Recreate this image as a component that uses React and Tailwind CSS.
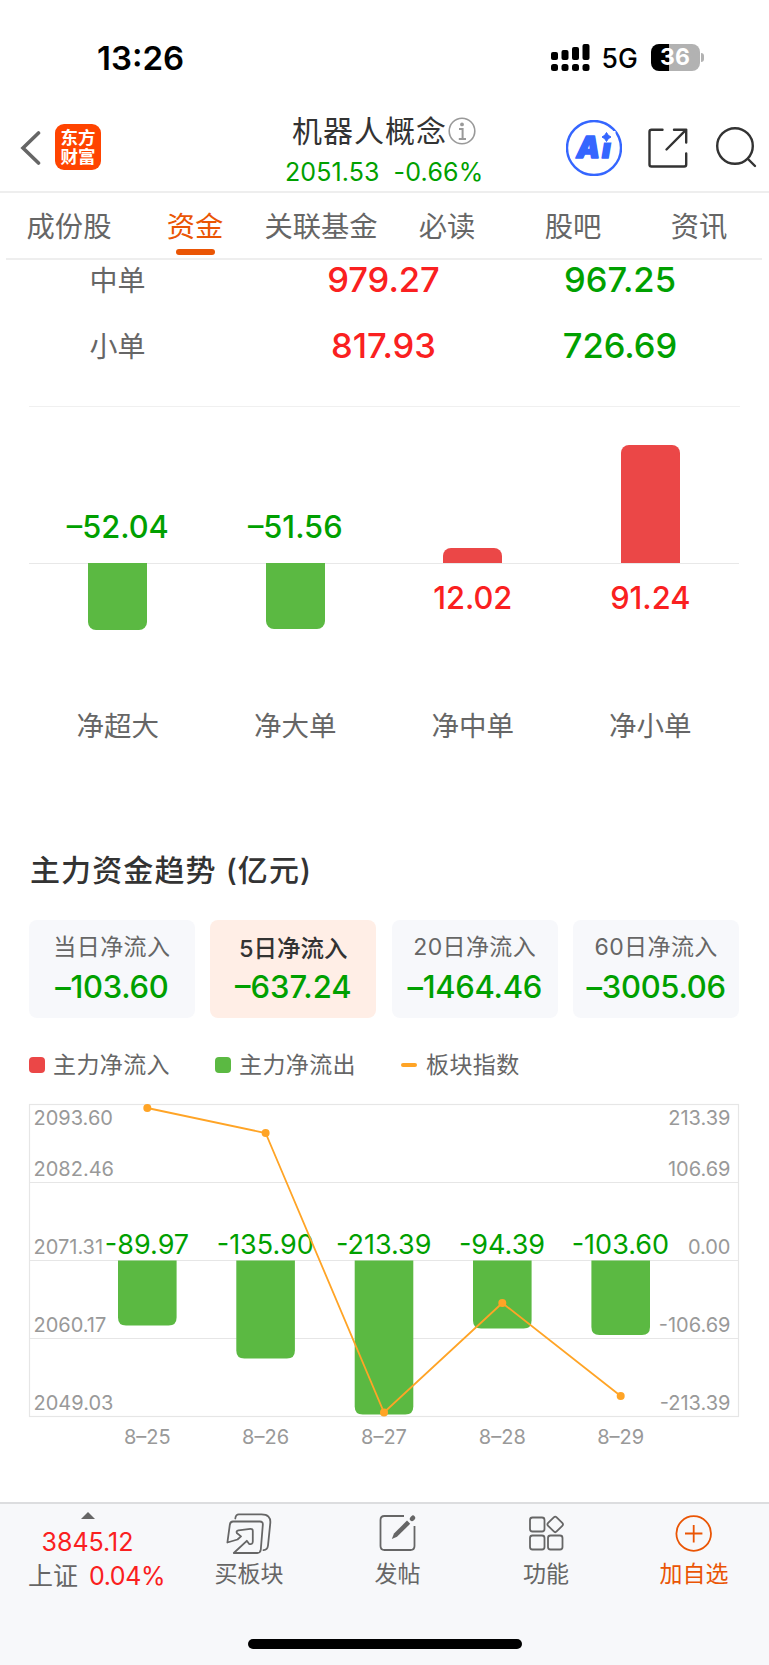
import React from 'react';

const tabs = ['成份股', '资金', '关联基金', '必读', '股吧', '资讯'];

const orders = [
    { name: '中单', inflow: '979.27', outflow: '967.25', height: 'h-[42px]' },
    { name: '小单', inflow: '817.93', outflow: '726.69', height: 'h-[66px]' },
];

const netFlows = [
    { name: '净超大', value: -52.04 },
    { name: '净大单', value: -51.56 },
    { name: '净中单', value: 12.02 },
    { name: '净小单', value: 91.24 },
];

const periods = [
    { name: '当日净流入', value: '–103.60' },
    { name: '5日净流入', value: '–637.24', active: true },
    { name: '20日净流入', value: '–1464.46' },
    { name: '60日净流入', value: '–3005.06' },
];

// x = column centre, bar = bottom of the bar, y = index point
const days = [
    { date: '8–25', value: '-89.97', x: 147.3, bar: 235.5, y: 18 },
    { date: '8–26', value: '-135.90', x: 265.6, bar: 268.5, y: 43 },
    { date: '8–27', value: '-213.39', x: 384, bar: 324.5, y: 322.5 },
    { date: '8–28', value: '-94.39', x: 502.3, bar: 238.5, y: 213 },
    { date: '8–29', value: '-103.60', x: 620.7, bar: 245, y: 306 },
];

const axis = [
    { left: '2093.60', right: '213.39', y: 35 },
    { left: '2082.46', right: '106.69', y: 86 },
    { left: '2071.31', right: '0.00', y: 164 },
    { left: '2060.17', right: '-106.69', y: 242.3 },
    { left: '2049.03', right: '-213.39', y: 320.3 },
];

function StatusBar() {
    return (
        <div className="flex h-[103px] items-start pt-[41px] pl-[97px] pr-[65px] text-black">
            <span className="text-[33px] leading-[34px] font-semibold">13:26</span>
            <div className="ml-auto flex h-[34px] items-center">
                <svg className="-mt-px" width="39" height="27" viewBox="0 0 39 27">
                    <rect x="0" y="8" width="7" height="8" rx="2" />
                    <rect x="10.5" y="6" width="7" height="10" rx="2" />
                    <rect x="21" y="3" width="7" height="13" rx="2" />
                    <rect x="31.5" y="0" width="7" height="16" rx="2" />
                    <rect x="0" y="20" width="7" height="7" rx="2.5" />
                    <rect x="10.5" y="20" width="7" height="7" rx="2.5" />
                    <rect x="21" y="20" width="7" height="7" rx="2.5" />
                    <rect x="31.5" y="20" width="7" height="7" rx="2.5" />
                </svg>
                <span className="mt-px ml-[12px] w-[36px] text-[26.5px] leading-none font-[450]">5G</span>
                <div className="-mt-px ml-[13px] flex h-[27px] w-[49px] items-center justify-center rounded-[8px] bg-linear-to-r from-black from-[37%] to-[#b2b2b2] to-[37%] text-[23px] leading-none font-bold text-white">
                    36
                </div>
                <div className="-mt-px ml-[1.5px] h-[9px] w-[3px] rounded-r-full bg-[#b2b2b2]"></div>
            </div>
        </div>
    );
}

function Header() {
    return (
        <div className="flex h-[90px] items-center border-b-2 border-[#eeeeee] pt-[2px] pr-[12px] pl-[20px]">
            <svg width="21" height="36" viewBox="0 0 21 36" fill="none" stroke="#666" strokeWidth="3.6" strokeLinecap="round">
                <path d="M18.5 3 L3 18 L18.5 33" strokeLinejoin="miter" />
            </svg>
            <div className="mb-[2px] ml-[14px] flex h-[46px] w-[46px] flex-col items-center justify-center rounded-[9px] bg-[#ff4400] text-[17.5px] leading-[19.5px] font-bold text-white">
                <span>东方</span>
                <span>财富</span>
            </div>
            <div className="mt-[5px] ml-[184px] flex w-[198px] flex-col">
                <div className="flex h-[34px] items-center pl-[7px]">
                    <span className="text-[30px] leading-none tracking-[1px] text-[#333]">机器人概念</span>
                    <svg className="ml-px" width="28" height="28" viewBox="0 0 28 28" fill="none" stroke="#999">
                        <circle cx="14" cy="14" r="12.8" strokeWidth="1.6" />
                        <circle cx="14" cy="7.4" r="1.9" fill="#999" stroke="none" />
                        <path d="M11 12 H14.6 V21.5 M10.8 22 H18" strokeWidth="2" />
                    </svg>
                </div>
                <div className="mt-[9px] flex h-[30px] items-center text-[25px] leading-none text-[#00a000]">
                    <span className="w-[95px] tracking-[0.1px]">2051.53</span>
                    <span className="ml-[14px] tracking-[0.2px]">-0.66%</span>
                </div>
            </div>
            <svg className="ml-auto" width="56" height="56" viewBox="0 0 56 56">
                <circle cx="28" cy="28" r="27" fill="none" stroke="#3566ff" strokeWidth="2.4" />
                <text x="10.5" y="38.3" fill="#3566ff" stroke="#3566ff" strokeWidth="1.6" strokeLinejoin="round" fontSize="29.5" fontWeight="900" fontStyle="italic" letterSpacing="2">Ai</text>
                <rect x="35.5" y="11" width="14" height="11.5" fill="#fff" />
                <path d="M40.5 12.5 Q41.8 15.8 45 17 Q41.8 18.2 40.5 21.5 Q39.2 18.2 36 17 Q39.2 15.8 40.5 12.5Z" fill="#3566ff" stroke="#3566ff" strokeWidth="1" />
            </svg>
            <svg className="ml-[26px]" width="40" height="40" viewBox="0 0 40 40" fill="none" stroke="#333" strokeWidth="2.4" strokeLinecap="round" strokeLinejoin="round">
                <path d="M14.5 1.7 H3.5 Q1.5 1.7 1.5 3.7 V36.5 Q1.5 38.5 3.5 38.5 H36.2 Q38.2 38.5 38.2 36.5 V25.5" />
                <path d="M26 1.7 H38.2 V14.5 M38.2 1.7 L18.5 21.5" />
            </svg>
            <svg className="ml-[27px]" width="42" height="42" viewBox="0 0 42 42" fill="none" stroke="#333" strokeWidth="2.4" strokeLinecap="round">
                <circle cx="20" cy="19" r="17.8" />
                <path d="M33 32 L40 39" />
            </svg>
        </div>
    );
}

function Tabs() {
    return (
        <div className="mr-[7px] ml-[6px] grid h-[67px] grid-cols-6 border-b-2 border-[#eeeeee] text-[28.3px] leading-none text-[#666]">
            {tabs.map((tab) => (
                <div
                    key={tab}
                    className={
                        tab === '资金'
                            ? 'flex flex-col items-center pt-[20px] whitespace-nowrap text-[#ea5504]'
                            : 'flex flex-col items-center pt-[20px] whitespace-nowrap'
                    }
                >
                    <span>{tab}</span>
                    {tab === '资金' && <div className="mt-[8px] h-[6px] w-[39px] rounded-full bg-[#ea5504]"></div>}
                </div>
            ))}
        </div>
    );
}

function OrderTable() {
    return (
        <div className="mx-[29px] flex h-[147px] flex-col gap-[12px] border-b border-[#f0f0f0]">
            {orders.map((row) => (
                <div
                    key={row.name}
                    className={`grid grid-cols-[177px_355px_118px] items-center text-center text-[34.5px] leading-none font-medium ${row.height}`}
                >
                    <span className="text-[28px] font-normal text-[#666]">{row.name}</span>
                    <span className="-mt-px text-[#fa2020]">{row.inflow}</span>
                    <span className="-mt-px text-[#00a000]">{row.outflow}</span>
                </div>
            ))}
        </div>
    );
}

function NetFlowChart() {
    return (
        <div className="mr-[30px] ml-[29px] grid grid-cols-4 text-[30.8px] leading-none font-[450]">
            {netFlows.map((item) => {
                const size = Math.abs(item.value) * 1.288;
                const up = item.value > 0;
                return (
                    <div key={item.name} className="flex flex-col items-center">
                        <div className="flex h-[156px] w-full flex-col items-center justify-end">
                            {up ? (
                                <div className="w-[59px] rounded-t-[8px] bg-[#eb4747]" style={{ height: size }}></div>
                            ) : (
                                <span className="mb-[20px] text-[#00a000]">–{Math.abs(item.value)}</span>
                            )}
                        </div>
                        <div className="flex h-[143px] w-full flex-col items-center border-t border-[#e8e8e8]">
                            {up ? (
                                <span className="mt-[19px] text-[#fa2020]">{item.value}</span>
                            ) : (
                                <div className="-mt-px w-[59px] rounded-b-[8px] bg-[#5bb942]" style={{ height: size }}></div>
                            )}
                        </div>
                        <span className="flex h-[40px] items-center pt-px text-[27.5px] font-normal text-[#666]">{item.name}</span>
                    </div>
                );
            })}
        </div>
    );
}

function PeriodCards() {
    return (
        <div className="mt-[30px] mr-[30px] ml-[29px] grid grid-cols-4 gap-[15.7px]">
            {periods.map((p) => (
                <div
                    key={p.name}
                    className={
                        p.active
                            ? 'flex h-[98px] flex-col items-center rounded-[8px] bg-[#ffeee6] pt-[17px] text-[#333]'
                            : 'flex h-[98px] flex-col items-center rounded-[8px] bg-[#f7f8fb] pt-[15px] text-[#666]'
                    }
                >
                    <span className={p.active ? 'text-[23.5px] leading-[24px] font-medium' : 'text-[23px] leading-[24px] tracking-[0.4px]'}>
                        {p.name}
                    </span>
                    <span className={p.active ? 'mt-[10px] text-[31px] leading-[32px] font-medium text-[#00a000]' : 'mt-[12px] text-[31px] leading-[32px] font-medium tracking-[-0.3px] text-[#00a000]'}>
                        {p.value}
                    </span>
                </div>
            ))}
        </div>
    );
}

function Legend() {
    return (
        <div className="mt-[27px] ml-[29px] flex h-[40px] items-center text-[23px] leading-none tracking-[0.4px] text-[#666]">
            <div className="h-[16px] w-[16px] rounded-[4px] bg-[#eb4747]"></div>
            <span className="mt-px ml-[8px] w-[162px]">主力净流入</span>
            <div className="h-[16px] w-[16px] rounded-[4px] bg-[#5bb942]"></div>
            <span className="mt-px ml-[8px] w-[162px]">主力净流出</span>
            <div className="h-[4px] w-[16px] rounded-full bg-[#ffa426]"></div>
            <span className="mt-px ml-[9px]">板块指数</span>
        </div>
    );
}

function TrendChart() {
    return (
        <svg className="mt-[5px] block" width="769" height="370" viewBox="0 0 769 370">
            <g fill="none" stroke="#e6e6e6" strokeWidth="1.2">
                <rect x="29.5" y="14.5" width="709" height="312" />
                <path d="M29.5 92.5 H738.5 M29.5 170.5 H738.5 M29.5 248.5 H738.5" />
            </g>
            <g fill="#999" fontSize="20">
                {axis.map((a) => (
                    <React.Fragment key={a.left}>
                        <text x="33.5" y={a.y}>{a.left}</text>
                        <text x="730.5" y={a.y} textAnchor="end">{a.right}</text>
                    </React.Fragment>
                ))}
                {days.map((d) => (
                    <text key={d.date} x={d.x} y="353.5" textAnchor="middle">{d.date}</text>
                ))}
            </g>
            {days.map((d) => (
                <path
                    key={d.date}
                    d={`M${d.x - 29.3} 170.5 h58.6 V${d.bar - 8} q0 8 -8 8 h-42.6 q-8 0 -8 -8 Z`}
                    fill="#5bb942"
                />
            ))}
            <g fill="#00a000" fontSize="27" textAnchor="middle">
                {days.map((d) => (
                    <text key={d.date} x={d.x - 0.3} y="163.9">{d.value}</text>
                ))}
            </g>
            <polyline points={days.map((d) => `${d.x},${d.y}`).join(' ')} fill="none" stroke="#ffa426" strokeWidth="1.8" />
            {days.map((d) => (
                <circle key={d.date} cx={d.x} cy={d.y} r="4" fill="#ffa426" />
            ))}
        </svg>
    );
}

function NavItem({ label, active, children }) {
    return (
        <div className={active ? 'flex flex-col items-center pt-[8px] text-[#ea5504]' : 'flex flex-col items-center pt-[8px] text-[#666]'}>
            <svg width="46" height="46" viewBox="0 0 46 46" fill="none" stroke="currentColor" strokeWidth="1.8" strokeLinejoin="round">
                {children}
            </svg>
            <span className="mt-[4px] text-[23px] leading-[24px]">{label}</span>
        </div>
    );
}

function BottomNav() {
    return (
        <div className="flex h-[163px] flex-col border-t-2 border-[#dcdddf] bg-[#f7f8fa]">
            <div className="grid grid-cols-[175px_148px_149px_148px_148px]">
                <div className="flex flex-col items-center pt-[8px] text-[25px] leading-none text-[#fa2020]">
                    <svg width="14" height="7" viewBox="0 0 14 7">
                        <path d="M0 7 L7 0 L14 7Z" fill="#666" />
                    </svg>
                    <span className="mt-[11px]">3845.12</span>
                    <div className="mt-[9px] ml-[18px] flex items-center">
                        <span className="text-[#666]">上证</span>
                        <span className="ml-[11px] tracking-[-0.4px]">0.04%</span>
                    </div>
                </div>
                <NavItem label="买板块">
                    <path d="M9.3 6.5 Q9.8 2.4 12.8 2.4 H35.5 Q45 2.4 44.3 11 L42 33.5 Q41.5 38 37.5 38.2" strokeLinecap="round" />
                    <path d="M1.4 30.5 L3.8 12.8 Q4.2 9.5 7 9.5 H33.8 Q37.2 9.5 36.8 13 L34.8 37.5 Q34.4 41 31.2 41 H7.8 L20.8 28.8 L23 31.8 Q26.8 32.8 26.8 29.5 V19 Q26.8 16.6 24.3 16.8 L12.5 18.3 Q10 19 10.8 21 L15 24.4 L11.5 27.5 Z" />
                </NavItem>
                <NavItem label="发帖">
                    <path d="M29 4 H9.5 Q5.5 4 5.5 8 V34 Q5.5 38 9.5 38 H35.5 Q39.5 38 39.5 34 V14" />
                    <path d="M16.8 27 L19 21.5 L32 8.6 L35.2 11.8 L22 24.8 Z" fill="currentColor" stroke="none" />
                    <path d="M37 6.8 L38 5.8" strokeWidth="4.6" strokeLinecap="round" />
                </NavItem>
                <NavItem label="功能">
                    <rect x="7" y="5.5" width="14.5" height="14" rx="2.5" />
                    <rect x="7" y="23.5" width="14.5" height="14" rx="2.5" />
                    <rect x="25" y="23.5" width="14.5" height="14" rx="2.5" />
                    <rect x="26.2" y="6.4" width="12" height="12" rx="2" transform="rotate(45 32.2 12.4)" />
                </NavItem>
                <NavItem label="加自选" active>
                    <circle cx="22.7" cy="21.5" r="17.3" />
                    <path d="M14 21.5 H31.4 M22.7 13 V30.5" />
                </NavItem>
            </div>
            <div className="mx-auto mt-auto mb-[16px] h-[10px] w-[274px] rounded-full bg-black"></div>
        </div>
    );
}

export default function App() {
    return (
        <div className="flex h-[1665px] w-[769px] flex-col overflow-hidden bg-white font-[Inter,'Noto_Sans_CJK_SC',sans-serif]">
            <StatusBar />
            <Header />
            <Tabs />
            <OrderTable />
            <NetFlowChart />
            <h2 className="mt-[104px] ml-[30px] flex h-[40px] items-center text-[30px] leading-none font-medium tracking-[1.1px] text-[#333]">
                主力资金趋势 (亿元)
            </h2>
            <PeriodCards />
            <Legend />
            <TrendChart />
            <div className="mt-auto">
                <BottomNav />
            </div>
        </div>
    );
}
